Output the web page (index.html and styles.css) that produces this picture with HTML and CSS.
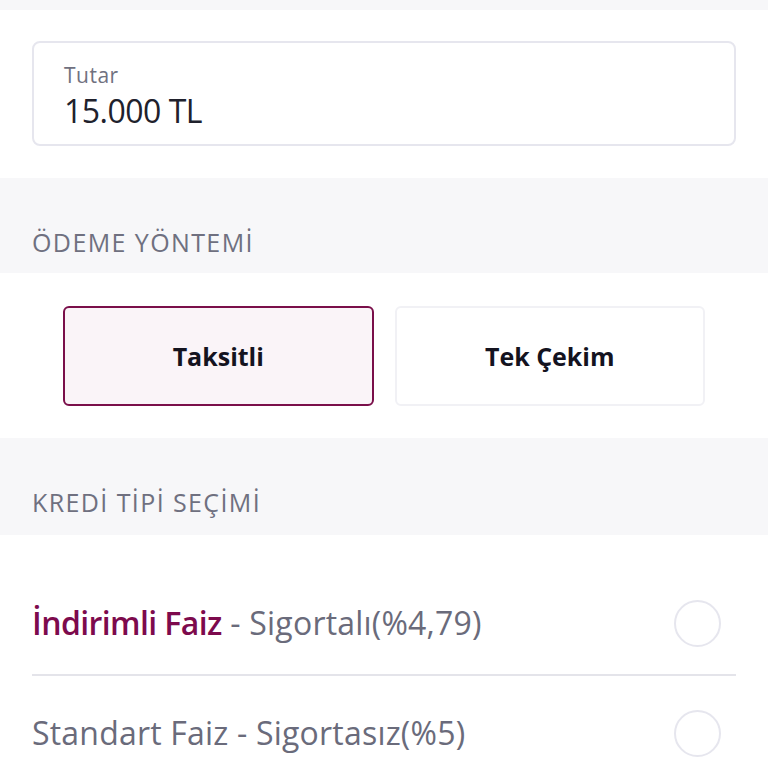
FILE: index.html
```html
<!DOCTYPE html>
<html lang="tr">
<head>
  <meta charset="UTF-8" />
  <meta name="viewport" content="width=device-width, initial-scale=1.0"/>
  <title>Kredi</title>
  <link rel="stylesheet" href="styles.css">
</head>
<body>
  <div class="strip"></div>
  <div class="amount-section">
    <div class="amount-box">
      <div class="amount-label">Tutar</div>
      <div class="amount-value">15.000 TL</div>
    </div>
  </div>
  <div class="section-title">ÖDEME YÖNTEMİ</div>
  <div class="method-section">
    <div class="method active">Taksitli</div>
    <div class="method">Tek Çekim</div>
  </div>
  <div class="section-title tall">KREDİ TİPİ SEÇİMİ</div>
  <ul class="types">
    <li class="type first">
      <span class="type-text"><b>İndirimli Faiz</b> - Sigortalı(%4,79)</span>
      <span class="radio"></span>
    </li>
    <li class="type">
      <span class="type-text">Standart Faiz - Sigortasız(%5)</span>
      <span class="radio"></span>
    </li>
  </ul>
</body>
</html>
```
FILE: styles.css
```css
body { margin: 0; padding: 0; font-family: 'Open Sans', sans-serif; background: #ffffff; }
.strip { height: 10px; background: #f7f7f9; }
.amount-section { padding: 31px 32px 32px 32px; }
.amount-box {
  height: 105px;
  box-sizing: border-box;
  border: 2px solid #e6e6ee;
  border-radius: 8px;
  padding: 18px 30px 0 30px;
}
.amount-label { font-size: 21px; color: #70717f; line-height: 28px; letter-spacing: 0.5px; }
.amount-value { font-size: 32px; color: #20212c; line-height: 40px; margin-top: 2px; letter-spacing: -0.5px; }
.section-title {
  background: #f7f7f9;
  color: #6f7080;
  font-size: 25px;
  letter-spacing: 1.4px;
  height: 95px;
  box-sizing: border-box;
  padding: 50px 32px 0 32px;
  line-height: 28px;
}
.section-title.tall { height: 97px; }
.method-section { display: flex; gap: 21px; padding: 33px 63px 32px 63px; }
.method {
  flex: 1;
  height: 100px;
  box-sizing: border-box;
  border: 2px solid #f1f1f5;
  border-radius: 6px;
  display: flex;
  align-items: center;
  justify-content: center;
  font-size: 25px;
  font-weight: bold;
  color: #14131f;
}
.method.active { background: #faf4f8; border-color: #7a0f4a; }
.types { list-style: none; margin: 0; padding: 0 32px; }
.type {
  display: flex;
  align-items: center;
  justify-content: space-between;
  font-size: 32px;
  letter-spacing: 0.2px;
  color: #6a6b7b;
}
.type.first { height: 141px; padding-top: 36px; box-sizing: border-box; border-bottom: 2px solid #e4e4ea; }
.type + .type { height: 112px; }
.type b { color: #7d0a4d; font-weight: 600; letter-spacing: -0.6px; }
.radio {
  width: 47px;
  height: 47px;
  box-sizing: border-box;
  border: 2px solid #e6e6ee;
  border-radius: 50%;
  margin: 2px 15px 0 0;
}
```
